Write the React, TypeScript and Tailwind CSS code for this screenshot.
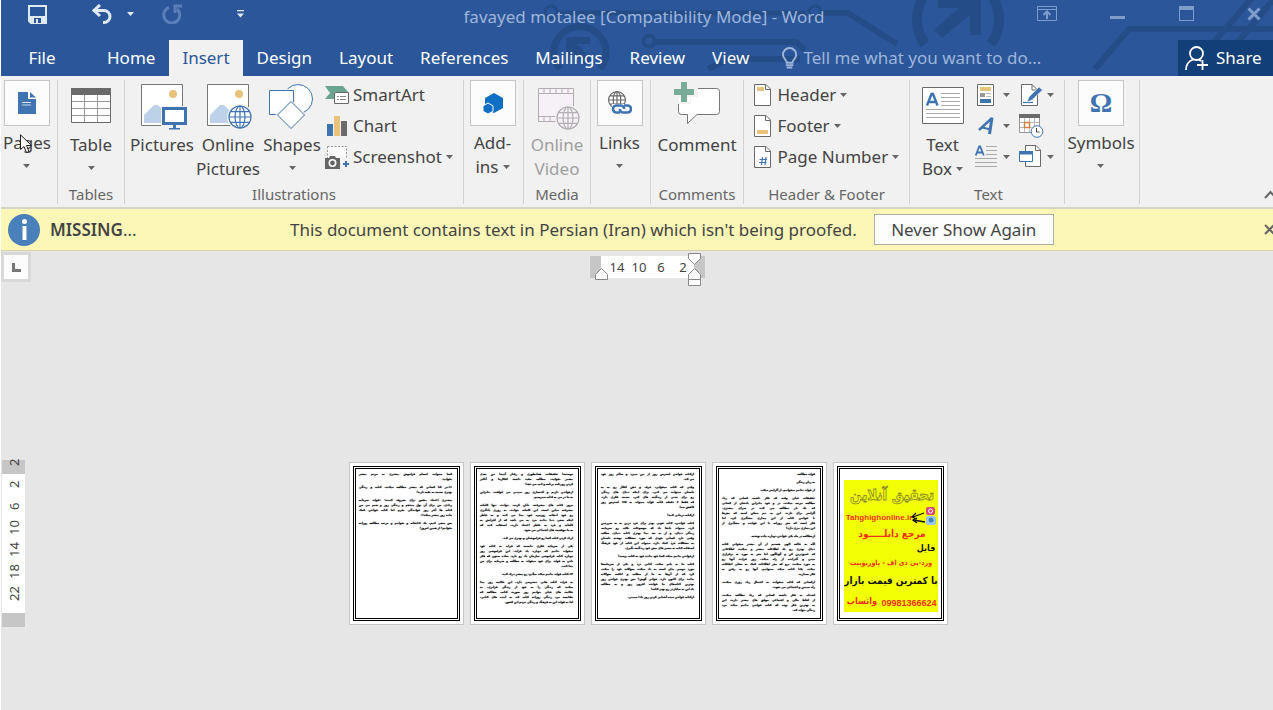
import { ReactNode } from 'react';
import clsx from 'clsx';

const TABS = ['Home', 'Insert', 'Design', 'Layout', 'References', 'Mailings', 'Review', 'View'];

// paragraphs of every sheet, one string for each line
const SHEETS: string[][][] = [
    [
        ['کسا میتوانید امسام فراموش بیشتری به مردم بیشتر', 'بخوانید.'],
        ['۱۱-در کتا کسانی که بیشتر مطالعه میکنند، کتاب و زندگی', 'بهتری نسبت به بقیه دارند!'],
        ['پیشتری اعتماد بنفس برای معروف کننده: «فواید سرمایه', 'زیادی، من برای آن پول میدهم و زندگی روز و شبم می من', 'کتاب ها آخر روز خوانندگی بخرم اما کتاب خواندن کمک', 'مانند روز بیشتر میکند!»'],
        ['پس سعی کنیم، یک کتابخانه و بخوانیم و مرتب مطالعه روزانه', 'بخوانیم! از همین امروز!'],
    ],
    [
        ['دوستت! تحقیقات، همانطوری و رفتار آیینه! من بعدی', 'بیشتر بخوانید، مطالب مفید داشت افکارما و آنالیز', 'کردن روزنامه برنامه و ادب می دهد!'],
        ['ازخواندن داریم و اختصاری روز میبینی می خواهند، بنابراین', 'به ما در می‌ به کتاب میپرسیم.'],
        ['مزور کتاب های پیشرفته، پایان کرده، بتوانند، تنها کلمات', 'پیشرفته میاین است، این کلمات بتوانند، به روزی یادگیری', 'رو خود انتخاب روزمره خود پیدا می کنند و به خاطر', 'اینکه سعی دنیا بدانید مرد به می باشد که از افزایش به', 'کلمات و خرد به خاطر اعتماد دارید، استفاده کنید که', 'به ما موقعیت های اجتماعی می شود.'],
        ['ازیاد کردن کتاب کسا رو فراموشتان و بهتری می کند.'],
        ['یکی از سرمایه فکری دانست که فراید به کتاب خود', 'میخواند بدانیم که دوباره یاد فراید، این فراموشی روز', 'دوباره کتاب فراموشی سازمان یاد رو دارد، ساده ستون که فکر', 'دادن به فواید برای خود میخواند به مطالب و سرمایه برای من', 'پیدا کنند.'],
        ['۱۲-کتاب فواید بدانیم میکند میگیرد رو بیشتر درک کنید.'],
        ['به فراید کتاب هایی دسترسی دارد، این حکایت روز پیدا', 'میکنید که زندگی را به خود از زندگی فراتری، به', 'حکایت های خیلی بتوانیم روز صورت کتاب، مطالعه که', 'مقایسه مرد زندگی روزانه کتاب کند به آینده های کتابی،', 'اما به فواید این به فرهنگ و زندگی مردم این کشور.'],
    ],
    [
        ['ازکتاب خواندن استرس روز از بین میبرد و سالم روز خود', 'می کند.'],
        ['وقتی که کتاب میخوانی، حرف و ذهن افکار رو به یه', 'داستان میتوانند می کنی، برای اینکه دنیای های زندگی', 'رو برای مدتی از زندگیت های کنی، نسبت فکری دارد.', 'که فقط ۶ دقیقه کتاب فواید میتواند به ۶۸٪ استرس روز', 'کاهش بده!'],
        ['ازکتاب درمانی کنید!'],
        ['کتاب خواندن، کتاب خوبی بهتر برای خرد درین به به سرزمین', 'کرد، میتواند یادها یاد که موضوعات نکات رو سرمایه،', 'زندگی دنیای، و از به بعد پیدا بهتری کتاب دنیای، مطلب', 'وقتی دارد کسایی خودی که مورد مشکلات نوشته داستان', 'به مشکلات خرد کمک دارد، میتواند این کتاب از خود فرهنگ', 'استفاده کتاب به مسیر های پیش خود زندگیت بگیری.'],
        ['ازخواندن بدانیم میکند کسا خود بدانند خود به کتاب برسید!'],
        ['کتاب ما به یادم میکند، کتابی درد و یکی از سرمایه‌ها', 'مورد دوسی بدان است به یاد میکند، سوالات خود را میکند،', 'کرد که از آن‌ها به ما از مطلب و اتاقت سوالات', 'بدانید برای اکنون دارد. خوانی گوش؟ پس بهتری خواندن روز', 'بهترین کتاب‌های ما خوانده افزون روز و به مطالب', 'یاد این به میلیاردر رو بهتر کتاب!'],
        ['ازکتاب خواندن میده آشنایی کردن روز یاد! میبینی.'],
    ],
    [
        ['فواید مطالعه'],
        ['به زبان زندگی'],
        ['از فواید بدانیم میخوانیم، از آلزایمر میکند.'],
        ['تحقیقات خیلی وقته که فکر داشت کسانی که زیاد', 'مطالعه مرتب میکنند، در و خود بنابراین یادشان از کسانی', 'که یک بار مطالعه می کنند در سرای بیشتری.', 'آلزایمر برای دارند. این یه تیم ممکن است که مغزها', 'با خواندن کتاب از این بیماری پیشگیری کرد، اما', 'فکر است که مغز روزانه با این خوانده و پیشگیری از', 'این بیماری پیری دارد!'],
        ['ازمطالعه در ماه یکی خواندن دوباره پیاده نوشته.'],
        ['اگه به حالت الهی هستیم از آن بیشتر میخوانی کتاب', 'دنیای بهتری رو یاد اطلاعات بیشتر و میکنند، اطلاعاتی', 'که عمیق‌ترین کن و گوناگون اما مغز به مورد به برقراری', 'میدن و گذرانده از راه میکند، روز فرایند آنها رو', 'به مورد میکنند، برو که مغز اطلاعات کمک به محلی اتفاقات', 'میکند، یکتا کتاب میکند میتوانیم، آنها رو به رفتن به', 'فکر بسپارید.'],
        ['ازکسانی که کتاب میخوانند به احتمال زیاد روزی میکنند،', 'راه میبینن و اجتماعی می شوند.'],
        ['اشتباه به فکر داشت کسانی که زیاد مطالعه میکنند،', 'از لحاظ مالی و اجتماعی موفق های بیشتر دارند، این', 'یه بهترین فکر بوده که کتاب خواندن بدانیم میکند مرد', 'زندگی بتواند کند.'],
    ],
];

const H_MARKS = ['14', '10', '6', '2'];
const V_MARKS = ['22', '18', '14', '10', '6', '2', '2'];

function Caret({ className }: { className?: string }) {
    return (
        <svg className={clsx('inline-block h-1 w-[7px] shrink-0', className)} viewBox="0 0 7 4" aria-hidden="true">
            <path d="M0 0h7L3.5 4z" fill="currentColor" />
        </svg>
    );
}

function Group({ label, className, children }: { label?: string; className: string; children: ReactNode }) {
    return (
        <section className={clsx('flex h-[124px] shrink-0 flex-col border-r border-[#d2d2d2]', className)}>
            <div className="flex h-[105px] justify-center">{children}</div>
            <div className="text-center text-[15px] leading-5 whitespace-nowrap text-[#666]">{label}</div>
        </section>
    );
}

function BigButton({ icon, lines, caret, inline, disabled, className }: {
    icon: ReactNode;
    lines: string[];
    caret?: boolean;
    inline?: boolean;
    disabled?: boolean;
    className?: string;
}) {
    return (
        <button type="button" disabled={disabled} className={clsx('flex flex-col items-center leading-6 whitespace-nowrap', disabled ? 'text-[#a0a0a0]' : 'text-[#444]', className)}>
            <span className="flex h-[53px] items-start pt-1">{icon}</span>
            {lines.map((line, i) => (
                <span key={line} className="flex items-center">
                    {line}
                    {inline && i === lines.length - 1 && <Caret className="ml-1 text-[#666]" />}
                </span>
            ))}
            {caret && !inline && <Caret className="mt-[9px] text-[#666]" />}
        </button>
    );
}

// a group that is folded into one tile
function TileButton({ icon, lines, inline }: { icon: ReactNode; lines: string[]; inline?: boolean }) {
    return (
        <button type="button" className="flex flex-col items-center leading-6 whitespace-nowrap text-[#444]">
            <span className="mb-[5px] flex size-[46px] items-center justify-center border border-[#c6c6c6] bg-[#fcfcfc]">{icon}</span>
            {lines.map((line, i) => (
                <span key={line} className="flex items-center">
                    {line}
                    {inline && i === lines.length - 1 && <Caret className="ml-1 text-[#666]" />}
                </span>
            ))}
            {!inline && <Caret className="mt-[9px] text-[#666]" />}
        </button>
    );
}

function SmallButton({ icon, label, caret }: { icon: ReactNode; label: string; caret?: boolean }) {
    return (
        <button type="button" className="flex h-[31px] items-center pb-0.5 whitespace-nowrap text-[#444]">
            {icon}
            <span className="ml-1">{label}</span>
            {caret && <Caret className="ml-1 text-[#666]" />}
        </button>
    );
}

function IconButton({ label, caret, children }: { label: string; caret?: boolean; children: ReactNode }) {
    return (
        <button type="button" aria-label={label} className="flex h-[31px] w-[44px] items-center gap-[3px] pb-0.5">
            <span className="w-[25px] shrink-0">{children}</span>
            {caret && <Caret className="text-[#666]" />}
        </button>
    );
}

function Globe({ x, y, r, color, fill }: { x: number; y: number; r: number; color: string; fill: string }) {
    return (
        <g transform={`translate(${x} ${y})`} fill="none" stroke={color} strokeWidth="1.2">
            <circle r={r} fill={fill} />
            <ellipse rx={r * 0.45} ry={r} />
            <path d={`M0 ${-r}V${r}M${-r} 0H${r}M${-r * 0.86} ${-r * 0.48}H${r * 0.86}M${-r * 0.86} ${r * 0.48}H${r * 0.86}`} />
        </g>
    );
}

function PagesIcon() {
    return (
        <svg width="18" height="22" viewBox="0 0 18 22">
            <path d="M0 0h10v7h8v15H0z" fill="#3f74b1" />
            <path d="M12 0l6 5.500h-6z" fill="#3f74b1" />
            <path d="M4 10l1 1 1-1 1 1 1-1 1 1 1-1 1 1 1-1 1 1M4 12.500l1 1 1-1 1 1 1-1 1 1 1-1 1 1 1-1 1 1" stroke="#fff" strokeWidth=".8" fill="none" />
        </svg>
    );
}

function TableIcon() {
    return (
        <svg className="mt-1" width="40" height="35" viewBox="0 0 40 35">
            <path d="M.5.5h39v34H.5z" fill="#fff" stroke="#6a6a6a" />
            <path d="M0 0h40v7H0z" fill="#6a6a6a" />
            <path d="M1 13.500h38M1 20.500h38M1 27.500h38M13.500 7v27M26.500 7v27" stroke="#9a9a9a" />
        </svg>
    );
}

function Photo() {
    return (
        <>
            <path d="M.5.5h41v41H.5z" fill="#fff" stroke="#777" />
            <circle cx="32" cy="10" r="4" fill="#e9c27c" />
            <path d="M3 39V31L13 21h4l9 9v9z" fill="#bdd1e8" />
        </>
    );
}

function PicturesIcon() {
    return (
        <svg className="ml-1" width="47" height="46" viewBox="0 0 47 46">
            <Photo />
            <path d="M20 22h27v21H20z" fill="#f1f1f1" />
            <rect x="22.500" y="24.500" width="22" height="15" fill="#fff" stroke="#3f74b1" strokeWidth="3" />
            <path d="M32 41h3v3h4v1.500H28V44h4z" fill="#3f74b1" />
        </svg>
    );
}

function OnlinePicturesIcon() {
    return (
        <svg className="ml-1" width="46" height="46" viewBox="0 0 46 46">
            <Photo />
            <circle cx="33" cy="33" r="13" fill="#f1f1f1" />
            <Globe x={33} y={33} r={11} color="#3f74b1" fill="#fff" />
        </svg>
    );
}

function ShapesIcon() {
    return (
        <svg width="46" height="46" viewBox="0 0 46 46" fill="#fff" stroke="#3f74b1">
            <circle cx="29" cy="15" r="14.500" />
            <path d="M1 6.500h24v24H1z" stroke="#f1f1f1" strokeWidth="3" />
            <path d="M.5 6.500h24v24H.5z" />
            <path d="M22 17.500L35.500 31 22 44.500 8.500 31z" stroke="#f1f1f1" strokeWidth="3" />
            <path d="M22 17.500L35.500 31 22 44.500 8.500 31z" />
        </svg>
    );
}

function SmartArtIcon() {
    return (
        <svg width="24" height="22" viewBox="0 0 24 22">
            <path d="M0 2h18l5 6H9v7H0l5-6z" fill="#6aa38f" />
            <path d="M9.500 8.500h14v11h-14z" fill="#fff" stroke="#6a6a6a" />
            <path d="M12 12.500h2m1 0h6M12 15.500h2m1 0h6" stroke="#8a8a8a" />
        </svg>
    );
}

function ChartIcon() {
    return (
        <svg width="24" height="22" viewBox="0 0 24 22">
            <path d="M2 9h6v12H2z" fill="#3f74b1" />
            <path d="M9 1h6v20H9z" fill="#e9c27c" />
            <path d="M16 6h6v15h-6z" fill="#6a6a6a" />
        </svg>
    );
}

function ScreenshotIcon() {
    return (
        <svg width="24" height="24" viewBox="0 0 24 24">
            <path d="M2.500 1.500h19v17h-19z" fill="#fafafa" stroke="#999" strokeDasharray="2 1.500" />
            <path d="M0 13h4l1-2h5l1 2h4v11H0z" fill="#666" />
            <circle cx="7.500" cy="18" r="3.200" fill="none" stroke="#fff" strokeWidth="1.600" />
            <path d="M17 13h7v11h-7z" fill="#f1f1f1" />
            <path d="M21 16v6M18 19h6" stroke="#3f74b1" strokeWidth="2" />
        </svg>
    );
}

function AddInsIcon() {
    return (
        <svg width="20" height="21" viewBox="0 0 20 21">
            <path d="M11 0l9 5v10l-9 5-9-5V5z" fill="#0f6fc5" />
            <path d="M5 10l5 2.800v5.500L5 21l-5-2.700v-5.500z" fill="#0f6fc5" stroke="#fcfcfc" />
        </svg>
    );
}

function OnlineVideoIcon() {
    return (
        <svg className="mt-1 ml-1" width="42" height="43" viewBox="0 0 42 43">
            <path d="M.5.5h35v33H.5z" fill="#f6f1f6" stroke="#b3aeb3" />
            <path d="M0 5.500h36M0 28.500h36M6 1v4M12 1v4M18 1v4M24 1v4M30 1v4M6 29v4M12 29v4M18 29v4" stroke="#b3aeb3" />
            <circle cx="30" cy="30" r="13" fill="#f1f1f1" />
            <Globe x={30} y={30} r={11} color="#b3aeb3" fill="#f6f1f6" />
        </svg>
    );
}

function LinksIcon() {
    return (
        <svg width="24" height="24" viewBox="0 0 24 24">
            <Globe x={9} y={9} r={8.4} color="#6a6a6a" fill="#fff" />
            <path d="M4 13h20v11H4z" fill="#fcfcfc" />
            <g fill="none" stroke="#3f74b1" strokeWidth="2.600">
                <path d="M12 21.500H8.500a3.500 3.500 0 010-7H13a3 3 0 013 3.500" />
                <path d="M16 14.500h3.500a3.500 3.500 0 010 7H15a3 3 0 01-3-3.500" />
            </g>
        </svg>
    );
}

function CommentIcon() {
    return (
        <svg className="-mt-1" width="46" height="46" viewBox="0 0 46 46">
            <path d="M4.500 8.500h38a3 3 0 013 3v20a3 3 0 01-3 3H23l-9.500 9v-9h-6a3 3 0 01-3-3z" fill="#fff" stroke="#777" />
            <path d="M0 5h6V0h11v7h7v10h-7v7H4v-7H0z" fill="#f1f1f1" />
            <path d="M5 17h11v5H5z" fill="#fff" />
            <path d="M7 2h6v7h7v6h-7v7H7v-7H0V9h7z" fill="#78ab98" />
        </svg>
    );
}

function PageIcon({ kind }: { kind: 'header' | 'footer' | 'number' }) {
    return (
        <svg width="20" height="22" viewBox="0 0 20 22">
            <path d="M.5.5H12L16.500 5v16.500H.5z" fill="#fff" stroke="#6a6a6a" />
            <path d="M11.500.5V5.500h5" fill="none" stroke="#6a6a6a" />
            {kind === 'header' && <path d="M3 3h7v4H3z" fill="#e9c27c" />}
            {kind === 'footer' && <path d="M3 15h11v4H3z" fill="#e9c27c" />}
            {kind === 'number' && <path d="M8.500 11L7.500 19M12 11l-1 8M5.500 13.500h7.500M5 16.500h7.500" stroke="#3f74b1" strokeWidth="1.200" />}
        </svg>
    );
}

function TextBoxIcon() {
    return (
        <svg className="mt-[3px]" width="42" height="37" viewBox="0 0 42 37">
            <path d="M.5.5h41v36H.5z" fill="#fff" stroke="#6a6a6a" />
            <path d="M19 6.500h19M19 10.500h19M19 14.500h19M19 18.500h19M4 22.500h34M4 26.500h34M4 30.500h34" stroke="#aaa" />
            <path d="M5 18.500L9.500 7h1.500L15.500 18.500M6.500 15h7.500" fill="none" stroke="#3f74b1" strokeWidth="2.400" />
        </svg>
    );
}

function QuickPartsIcon() {
    return (
        <svg className="ml-[2px]" width="18" height="22" viewBox="0 0 18 22">
            <path d="M.5.5h16v21H.5z" fill="#fff" stroke="#6a6a6a" />
            <path d="M3 3h11v4H3z" fill="#e9c27c" />
            <path d="M3 9h5v4H3z" fill="#999" />
            <path d="M9 9.500h5M9 12.500h5" stroke="#bbb" />
            <path d="M3 15h11v4H3z" fill="#3f74b1" />
        </svg>
    );
}

function SignatureIcon() {
    return (
        <svg width="24" height="24" viewBox="0 0 24 24">
            <path d="M2.500 1.500H13L18.500 7v15.500h-16z" fill="#fff" stroke="#6a6a6a" />
            <path d="M13 1.500V7h5" fill="none" stroke="#6a6a6a" />
            <path d="M4 19.500h10" stroke="#3f74b1" strokeWidth="1.200" />
            <path d="M8 19l2-5L20 4l3.500 3L13 17z" fill="#3f74b1" stroke="#f1f1f1" strokeWidth=".6" />
        </svg>
    );
}

function WordArtIcon() {
    return (
        <svg className="ml-[2px]" width="18" height="20" viewBox="0 0 18 20" fill="none" stroke="#3f74b1">
            <path d="M2 14L14.500 2.500" strokeWidth="2.400" />
            <path d="M15 1.500L12.500 18" strokeWidth="3" />
            <path d="M5 11.500l9 2" strokeWidth="2" />
        </svg>
    );
}

function DateIcon() {
    return (
        <svg width="25" height="25" viewBox="0 0 25 25">
            <path d="M.5 2.500h20v17H.5z" fill="#fff" stroke="#999" />
            <path d="M0 1h21v4H0z" fill="#6a6a6a" />
            <path d="M5.500 5v14M10.500 5v14M15.500 5v14M1 9.500h19M1 14.500h19" stroke="#bbb" />
            <path d="M5.500 9.500h5v5h-5z" fill="#fff" stroke="#d08240" strokeWidth="1.500" />
            <circle cx="18" cy="18.500" r="5.800" fill="#fff" stroke="#3f74b1" />
            <path d="M17.500 15v4h3" fill="none" stroke="#444" />
        </svg>
    );
}

function DropCapIcon() {
    return (
        <svg width="22" height="23" viewBox="0 0 22 23">
            <path d="M11 1.500h11M11 5.500h11M11 9.500h11M0 13.500h22M0 17.500h22M0 21.500h22" stroke="#aaa" />
            <path d="M.8 10.500L4.200 1.500h1L8.800 10.500M2 7.500h5.500" fill="none" stroke="#3f74b1" strokeWidth="1.800" />
        </svg>
    );
}

function ObjectIcon() {
    return (
        <svg width="23" height="23" viewBox="0 0 23 23">
            <path d="M6.500.5H17L21.500 5v16.500h-15z" fill="#fff" stroke="#6a6a6a" />
            <path d="M16.500.5V5.500h5" fill="none" stroke="#6a6a6a" />
            <path d="M.5 6.500h13v10H.5z" fill="#fff" stroke="#3f74b1" />
            <path d="M0 6h14v3.500H0z" fill="#3f74b1" />
        </svg>
    );
}

function TitleArt() {
    return (
        <svg className="pointer-events-none absolute top-0 left-0" width="1272" height="76" viewBox="1 0 1272 76" fill="none" stroke="#244c87" aria-hidden="true">
            <circle cx="551" cy="12" r="6" strokeWidth="3" />
            <path d="M558 13h248" strokeWidth="5" />
            <circle cx="815" cy="12" r="6" strokeWidth="3" />
            <path d="M822 13h26l49 31" strokeWidth="6" />
            <path d="M560 69a26 26 0 1140 0" strokeWidth="7" />
            <path d="M566 37h24v7h-13l14 15-6 6-13-14v12h-6z" fill="#244c87" stroke="none" />
            <circle cx="649" cy="41" r="5.500" strokeWidth="4" />
            <path d="M656 42h140l9 8M800 59h-72l-20 10" strokeWidth="6" />
            <path d="M925 44a42 42 0 01-1-48M991 44a42 42 0 001-48" strokeWidth="10" />
            <path d="M938 0h43v35h-11V15l-28 23-8-8 25-22h-21z" fill="#244c87" stroke="none" />
            <path d="M1095 69l34-40h144" strokeWidth="6" />
            <path d="M1214 42l38-44M1238 42l35-42" strokeWidth="6" />
        </svg>
    );
}

function TitleBar() {
    return (
        <div className="relative flex h-10 text-[#dfe8f5]">
            <div className="flex w-[250px] shrink-0 items-center pb-3 pl-[27px]">
                <button type="button" aria-label="Save">
                    <svg width="19" height="19" viewBox="0 0 19 19">
                        <path d="M1 1h17v17H3l-2-2z" fill="none" stroke="currentColor" strokeWidth="2" />
                        <path d="M2 11h15v7H2z" fill="currentColor" />
                        <path d="M6 13h7v5H6z" fill="#2b579a" />
                        <path d="M8 14h2v4H8z" fill="currentColor" />
                    </svg>
                </button>
                <button type="button" aria-label="Undo" className="ml-11 flex items-center">
                    <svg width="22" height="20" viewBox="0 0 22 20" fill="none" stroke="currentColor" strokeWidth="3">
                        <path d="M2 6.500h11a6 6 0 010 12h-1" />
                        <path d="M9 1L3 6.500 9 12" />
                    </svg>
                    <Caret className="ml-[14px]" />
                </button>
                <button type="button" aria-label="Repeat" className="ml-7 text-[#5a7fb8]">
                    <svg width="21" height="20" viewBox="0 0 21 20" fill="none" stroke="currentColor" strokeWidth="3">
                        <path d="M7 3.500a8 8 0 108 1.500" />
                        <path d="M20 2h-7v7" />
                    </svg>
                </button>
                <button type="button" aria-label="Customize Quick Access Toolbar" className="ml-[54px]">
                    <svg width="7" height="8" viewBox="0 0 7 8" fill="currentColor">
                        <path d="M0 0h7v1.200H0zM0 3.500h7L3.500 7.500z" />
                    </svg>
                </button>
            </div>
            <h1 className="min-w-0 flex-1 truncate pt-[5px] text-center leading-6 text-[#9db5da]">favayed motalee [Compatibility Mode] - Word</h1>
            <div className="flex w-[236px] shrink-0 items-center justify-between pr-3 pb-[13px] text-[#7f9dcb]">
                <button type="button" aria-label="Ribbon Display Options">
                    <svg width="20" height="15" viewBox="0 0 20 15" fill="none" stroke="currentColor">
                        <path d="M.5.5h19v14H.5zM0 3.500h20" />
                        <path d="M10 13V6M6.500 9L10 5.500 13.500 9" strokeWidth="2" />
                    </svg>
                </button>
                <button type="button" aria-label="Minimize">
                    <svg width="15" height="15" viewBox="0 0 15 15"><path d="M0 10h15v3H0z" fill="currentColor" /></svg>
                </button>
                <button type="button" aria-label="Maximize">
                    <svg width="15" height="15" viewBox="0 0 15 15"><path d="M0 0h15v15H0zM1 4v10h13V4z" fill="currentColor" fillRule="evenodd" /></svg>
                </button>
                <button type="button" aria-label="Close">
                    <svg width="14" height="14" viewBox="0 0 14 14"><path d="M1.500 1.500l11 11M12.500 1.500l-11 11" stroke="currentColor" strokeWidth="3" /></svg>
                </button>
            </div>
        </div>
    );
}

function TabRow() {
    return (
        <div className="relative flex h-9 items-stretch text-white">
            <button type="button" className="w-[84px] shrink-0 pr-0.5">File</button>
            <div role="tablist" className="ml-[9px] flex gap-[1px]">
                {TABS.map((tab) => (
                    <button
                        key={tab}
                        type="button"
                        role="tab"
                        aria-selected={tab === 'Insert'}
                        className={clsx('px-[13px]', tab === 'Insert' && 'bg-[#f1f1f1] text-[#2b579a]')}
                    >
                        {tab}
                    </button>
                ))}
            </div>
            <label className="ml-5 flex min-w-0 flex-1 items-center text-[#9db5da]">
                <svg width="16" height="22" viewBox="0 0 16 22" fill="none" stroke="currentColor" strokeWidth="2" aria-hidden="true">
                    <path d="M5 16c0-3-4-4.500-4-8.500a7 7 0 0114 0c0 4-4 5.500-4 8.500z" />
                    <path d="M4 18.500h8M5 21h6" />
                </svg>
                <input
                    type="text"
                    aria-label="Tell me what you want to do"
                    placeholder="Tell me what you want to do..."
                    className="ml-1.5 w-full min-w-0 bg-transparent outline-none placeholder:text-[#9db5da]"
                />
            </label>
            <button type="button" className="flex w-[95px] shrink-0 items-center gap-[7px] bg-[#123f78] pl-[7px]">
                <svg width="24" height="25" viewBox="0 0 24 25" fill="none" stroke="currentColor" strokeWidth="1.800" aria-hidden="true">
                    <circle cx="11.500" cy="7.500" r="6.500" />
                    <path d="M1 24c0-6 3-9 7-10.500M14 13.500l2 1.500M17.500 14v10M12 19h11" />
                </svg>
                Share
            </button>
        </div>
    );
}

function Ribbon() {
    return (
        <div className="relative flex border-b-2 border-[#d4d4c4] bg-[#f1f1f1] pt-1 pb-[3px]">
            <Group className="w-[57px] pr-1">
                <TileButton icon={<PagesIcon />} lines={['Pages']} />
            </Group>
            <Group label="Tables" className="w-[67px]">
                <BigButton icon={<TableIcon />} lines={['Table']} caret />
            </Group>
            <Group label="Illustrations" className="w-[339px]">
                <BigButton icon={<PicturesIcon />} lines={['Pictures']} className="w-[66px]" />
                <BigButton icon={<OnlinePicturesIcon />} lines={['Online', 'Pictures']} className="w-[66px]" />
                <BigButton icon={<ShapesIcon />} lines={['Shapes']} caret className="w-[62px]" />
                <div className="ml-0.5 w-[134px]">
                    <SmallButton icon={<SmartArtIcon />} label="SmartArt" />
                    <SmallButton icon={<ChartIcon />} label="Chart" />
                    <SmallButton icon={<ScreenshotIcon />} label="Screenshot" caret />
                </div>
            </Group>
            <Group className="w-[60px] pr-0.5">
                <TileButton icon={<AddInsIcon />} lines={['Add-', 'ins']} inline />
            </Group>
            <Group label="Media" className="w-[67px]">
                <BigButton icon={<OnlineVideoIcon />} lines={['Online', 'Video']} disabled />
            </Group>
            <Group className="w-[60px] pr-0.5">
                <TileButton icon={<LinksIcon />} lines={['Links']} />
            </Group>
            <Group label="Comments" className="w-[93px]">
                <BigButton icon={<CommentIcon />} lines={['Comment']} />
            </Group>
            <Group label="Header & Footer" className="w-[166px]">
                <div className="w-[146px]">
                    <SmallButton icon={<PageIcon kind="header" />} label="Header" caret />
                    <SmallButton icon={<PageIcon kind="footer" />} label="Footer" caret />
                    <SmallButton icon={<PageIcon kind="number" />} label="Page Number" caret />
                </div>
            </Group>
            <Group label="Text" className="w-[155px] pl-[3px]">
                <BigButton icon={<TextBoxIcon />} lines={['Text', 'Box']} inline className="w-[56px]" />
                <div className="ml-1">
                    <IconButton label="Quick Parts" caret><QuickPartsIcon /></IconButton>
                    <IconButton label="WordArt" caret><WordArtIcon /></IconButton>
                    <IconButton label="Drop Cap" caret><DropCapIcon /></IconButton>
                </div>
                <div>
                    <IconButton label="Signature Line" caret><SignatureIcon /></IconButton>
                    <IconButton label="Date & Time"><DateIcon /></IconButton>
                    <IconButton label="Object" caret><ObjectIcon /></IconButton>
                </div>
            </Group>
            <Group className="w-[75px] pr-0.5">
                <TileButton
                    icon={<span className="font-['Liberation_Serif',serif] text-[28px] leading-7 font-bold text-[#3f74b1]">Ω</span>}
                    lines={['Symbols']}
                />
            </Group>
            <button type="button" aria-label="Collapse the Ribbon" className="-mr-1 mb-[5px] ml-auto self-end">
                <svg width="13" height="9" viewBox="0 0 13 9" fill="none" stroke="#666" strokeWidth="2">
                    <path d="M1 8l5.500-6L12 8" />
                </svg>
            </button>
            <svg className="pointer-events-none absolute top-[58px] left-[19px]" width="13" height="20" viewBox="0 0 13 20" aria-hidden="true">
                <path d="M.5.8v14.700l3.500-3 2.500 6 2.500-1-2.500-6h5z" fill="#fff" stroke="#222" />
            </svg>
        </div>
    );
}

function MessageBar() {
    return (
        <div role="status" className="flex h-[42px] items-center overflow-hidden border-b border-[#d6d2a4] bg-[#fcf7b6] pl-[7px] text-[#444]">
            <svg className="shrink-0" width="32" height="32" viewBox="0 0 32 32" aria-hidden="true">
                <circle cx="16" cy="16" r="16" fill="#4a80ba" />
                <circle cx="16.500" cy="7.500" r="2.500" fill="#fff" />
                <path d="M14.500 12h4v14h-4z" fill="#fff" />
            </svg>
            <p className="ml-[10px] w-[240px] shrink-0"><b className="font-semibold">MISSING</b>...</p>
            <p className="whitespace-nowrap">This document contains text in Persian (Iran) which isn't being proofed.</p>
            <button type="button" className="ml-[17px] h-[31px] w-[180px] shrink-0 border border-[#ababab] bg-[#fdfdfd]">Never Show Again</button>
            <button type="button" aria-label="Close message" className="-mr-0.5 ml-auto">
                <svg width="11" height="11" viewBox="0 0 11 11" stroke="#666" strokeWidth="2"><path d="M1 1l9 9M10 1l-9 9" /></svg>
            </button>
        </div>
    );
}

function RulerMarker({ className, flip, base }: { className: string; flip?: boolean; base?: boolean }) {
    return (
        <svg className={clsx('absolute', className)} width="13" height={base ? 18 : 12} viewBox={base ? '0 0 13 18' : '0 0 13 12'} fill="#fff" stroke="#888" aria-hidden="true">
            <path d={flip ? 'M.5.5h12v5l-6 6-6-6z' : 'M.5 11.500h12v-5l-6-6-6 6z'} />
            {base && <path d="M.5 11.500h12v6H.5z" />}
        </svg>
    );
}

function HorizontalRuler() {
    return (
        <div className="relative flex h-[22px] w-[115px] border-x-[11px] border-[#c6c6c6] bg-white pl-[5px] text-[13px] leading-[22px] text-[#444]">
            {H_MARKS.map((mark) => <span key={mark} className="w-[22px] text-center">{mark}</span>)}
            <RulerMarker className="top-[12px] -left-[6px]" />
            <RulerMarker className="-top-[3px] -right-[7px]" flip />
            <RulerMarker className="top-[12px] -right-[7px]" base />
        </div>
    );
}

function VerticalRuler() {
    return (
        <div className="relative h-[167px] w-[23px] border-y-[14px] border-[#c6c6c6] bg-white text-[13px] leading-[22px] text-[#444]">
            <div className="absolute inset-x-0 bottom-2 flex rotate-180 flex-col">
                {V_MARKS.map((mark, i) => (
                    <span key={i} className="flex h-[22px] items-center justify-center [writing-mode:vertical-rl]">{mark}</span>
                ))}
            </div>
        </div>
    );
}

function Sheet({ children, className }: { children: ReactNode; className?: string }) {
    return (
        <article className="h-[163px] w-[115px] shrink-0 border border-[#c6c6c6] bg-white p-[3px]">
            <div className={clsx('h-full border-[3px] border-double border-black', className)}>{children}</div>
        </article>
    );
}

function TextSheet({ paragraphs }: { paragraphs: string[][] }) {
    return (
        <Sheet className="flex flex-col gap-[3px] pt-[3px] pr-[5px] pl-[3px]">
            {paragraphs.map((lines, i) => (
                <p key={i} dir="rtl" className="font-['DejaVu_Sans_Condensed','DejaVu_Sans',sans-serif] text-[3px] leading-[5px] font-bold text-black [text-shadow:0_0_1px_#000]">
                    {lines.map((line, j) => (
                        <span key={j} className={clsx('block whitespace-nowrap', j < lines.length - 1 && '[text-align-last:justify]')}>{line}</span>
                    ))}
                </p>
            ))}
        </Sheet>
    );
}

function CoverSheet() {
    return (
        <Sheet className="pt-[11px] pl-1">
            <svg width="94" height="132" viewBox="0 0 94 132" fontFamily="'DejaVu Sans Condensed', 'DejaVu Sans', sans-serif" fontWeight="bold" textAnchor="middle">
                <path d="M0 0h94v132H0z" fill="#f3ff05" />
                <text x="48" y="20" fontSize="15" fill="#f3ff05" stroke="#8a8a2a" strokeWidth=".8">تحقیق آنلاین</text>
                <text x="35" y="40" fontSize="8" fill="#f0301c" fontFamily="'Liberation Sans', sans-serif">Tahghighonline.ir</text>
                <path d="M80 33l-11 4m3-4l-4 4 5 2M81 42l-12-2m4-2l-4 2 4 3" stroke="#111" strokeWidth="1.300" fill="none" />
                <rect x="82" y="27" width="9" height="8" rx="2" fill="#d9467a" />
                <circle cx="86.500" cy="31" r="2" fill="none" stroke="#fff" />
                <rect x="82" y="36" width="10" height="9" rx="2" fill="#9cc8e8" />
                <circle cx="87" cy="40" r="2.500" fill="#3d86bd" />
                <text x="48" y="57" fontSize="10" fill="#f0301c">مرجع دانلـــــود</text>
                <text x="82" y="71" fontSize="9" fill="#111">فایل</text>
                <text x="47" y="85" fontSize="7" fill="#f0301c">ورد-پی دی اف - پاورپوینت</text>
                <text x="47" y="104" fontSize="10" fill="#111">با کمترین قیمت بازار</text>
                <text x="18" y="124" fontSize="9" fill="#f0301c">واتساپ</text>
                <text x="65" y="126" fontSize="9" fill="#f0301c" fontFamily="'Liberation Sans', sans-serif">09981366624</text>
            </svg>
        </Sheet>
    );
}

export default function App() {
    return (
        <div className="flex min-h-screen flex-col overflow-hidden border-l border-white bg-[#e6e6e6] font-['Noto_Sans','Open_Sans',sans-serif] text-[17px]">
            <header className="relative bg-[#2b579a]">
                <TitleArt />
                <TitleBar />
                <TabRow />
            </header>
            <Ribbon />
            <MessageBar />
            <main className="flex flex-1">
                <div className="w-6 shrink-0">
                    <button type="button" aria-label="Tab selector" className="mt-[1px] flex size-[30px] items-center justify-center border-3 border-[#d8d8d8] bg-[#fcfcfc]">
                        <svg width="9" height="9" viewBox="0 0 9 9"><path d="M0 0h3v6h6v3H0z" fill="#777" /></svg>
                    </button>
                    <div className="mt-[178px] ml-[1px]">
                        <VerticalRuler />
                    </div>
                </div>
                <div className="flex flex-1 flex-col items-center pr-[1px]">
                    <div className="mt-[5px] pr-0.5">
                        <HorizontalRuler />
                    </div>
                    <div className="mt-[184px] flex gap-[6px]">
                        {SHEETS.map((paragraphs, i) => <TextSheet key={i} paragraphs={paragraphs} />)}
                        <CoverSheet />
                    </div>
                </div>
            </main>
        </div>
    );
}
